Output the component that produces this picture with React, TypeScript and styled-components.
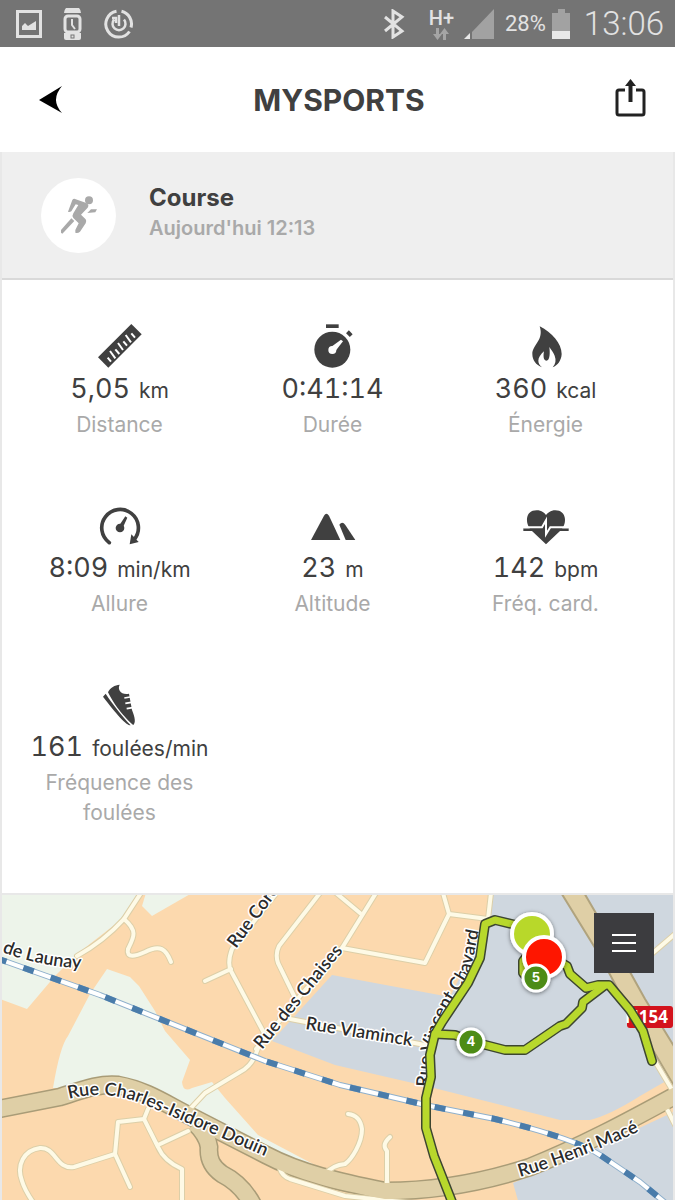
import React from 'react';
import styled, { createGlobalStyle } from 'styled-components';

const GlobalStyle = createGlobalStyle`
  *, *::before, *::after { box-sizing: border-box; }
  body {
    margin: 0;
    background: #fff;
    color: #404040;
    font-family: Inter, "Liberation Sans", sans-serif;
  }
`;

const Page = styled.div`
  display: flex;
  flex-direction: column;
  min-height: 100vh;
`;

const StatusBar = styled.div`
  display: flex;
  align-items: center;
  justify-content: space-between;
  height: 47px;
  padding: 0 11px 0 16px;
  background: #747474;
  color: #e2e2e2;
  font-family: Roboto, "Liberation Sans", sans-serif;
`;

const StatusGroup = styled.div<{ $gap: number }>`
  display: flex;
  align-items: center;
  gap: ${(p) => p.$gap}px;
`;

const Network = styled.span`
  display: flex;
  flex-direction: column;
  align-items: center;
  font-size: 20px;
  font-weight: 500;
  line-height: 20px;
  margin: 0 4px 0 18px;
`;

const Battery = styled.span`
  margin-left: 5px;
  font-size: 22px;
`;

const Clock = styled.time`
  font-size: 33px;
  font-weight: 300;
  margin-left: 8px;
`;

const Header = styled.header`
  display: flex;
  align-items: center;
  justify-content: space-between;
  height: 105px;
  padding: 0 27px 0 36px;
`;

const Title = styled.h1`
  margin: 0;
  font-size: 30px;
  font-weight: 700;
`;

const IconButton = styled.button`
  display: flex;
  padding: 0;
  border: 0;
  background: none;
  cursor: pointer;
`;

const Content = styled.main`
  display: flex;
  flex-direction: column;
  flex: 1;
  border: solid #e8e8e8;
  border-width: 0 2px;
`;

const Summary = styled.section`
  display: flex;
  align-items: center;
  gap: 33px;
  height: 128px;
  padding: 0 39px;
  background: #efefef;
  border-bottom: 2px solid #d9d9d9;
`;

const Avatar = styled.span`
  display: flex;
  align-items: center;
  justify-content: center;
  flex: none;
  width: 75px;
  height: 75px;
  border-radius: 50%;
  background: #fff;
`;

const Activity = styled.h2`
  margin: 0;
  font-size: 24px;
  line-height: 30px;
  font-weight: 700;
`;

const When = styled.p`
  margin: 0;
  padding-bottom: 4px;
  font-size: 20px;
  line-height: 30px;
  font-weight: 600;
  color: #a9a9a9;
`;

const Stats = styled.section`
  display: grid;
  grid-template-columns: repeat(3, 1fr);
  row-gap: 62px;
  padding: 43px 21px 65px 11px;
`;

const Stat = styled.div`
  display: flex;
  flex-direction: column;
  align-items: center;
  text-align: center;
`;

const StatIcon = styled.span`
  display: flex;
  align-items: center;
  height: 46px;
`;

const Value = styled.div`
  display: flex;
  align-items: baseline;
  gap: 9px;
  height: 41px;
  font-size: 27px;
  line-height: 40px;
  font-variant-numeric: tabular-nums;
  white-space: nowrap;
`;

const Unit = styled.span`
  font-size: 21px;
  line-height: 30px;
`;

const Label = styled.div`
  padding: 0 24px;
  font-size: 21px;
  line-height: 30px;
  color: #a9a9a9;
`;

const MapPanel = styled.section`
  position: relative;
  border-top: 2px solid #e8e8e8;
  overflow: hidden;
`;

const MapDrawing = styled.svg`
  display: block;
  width: 100%;
  height: auto;
`;

const MapMenu = styled.button`
  position: absolute;
  top: 18px;
  right: 19px;
  display: flex;
  align-items: center;
  justify-content: center;
  width: 60px;
  height: 60px;
  padding: 0;
  border: 0;
  background: #3c3c3f;
  cursor: pointer;
`;

type DrawingProps = { box: string; width: number; height: number; color?: string; children: React.ReactNode };

const Drawing = ({ box, width, height, color = '#404040', children }: DrawingProps) => (
  <svg viewBox={box} width={width} height={height} fill={color} aria-hidden="true">
    {children}
  </svg>
);

const RulerIcon = () => (
  <Drawing box="231 39 138 138" width={46} height={46}>
    <path d="M334 42L365 73L265 173L234 142Z" />
    <path
      d="M263 143L273 155M270 123L286 145M286 118L298 132M294 99L309 120M310 94L321 107M317 75L333 97M334 70L345 83"
      stroke="#fff"
      strokeWidth="6"
    />
  </Drawing>
);

const StopwatchIcon = () => (
  <Drawing box="869 39 138 138" width={46} height={46}>
    <circle cx="936" cy="119" r="54" />
    <rect x="917" y="43" width="38" height="11" />
    <rect x="979" y="65" width="16" height="12" transform="rotate(45 987 71)" />
    <circle cx="936" cy="120" r="12" fill="#fff" />
    <path d="M932 111L962 89L968 94L946 122Z" fill="#fff" />
  </Drawing>
);

const FlameIcon = () => (
  <Drawing box="488 39 138 138" width={46} height={46}>
    <path d="M538 49C575 68 604 100 604 132C603 152 592 166 577 172C586 162 588 150 583 137C579 126 572 119 567 111C569 125 570 152 558 152C548 152 549 134 551 124C541 133 534 143 534 152C534 160 539 167 545 172C527 165 516 150 516 132C516 105 552 90 538 49Z" />
  </Drawing>
);

const PaceIcon = () => (
  <Drawing box="231 40 138 138" width={46} height={46}>
    <path d="M268 162A55 55 0 1 1 343 152" fill="none" stroke="#404040" strokeWidth="11" strokeLinecap="round" />
    <path d="M334 137L329 167L356 160Z" />
    <circle cx="300" cy="118" r="13" />
    <path d="M298 110L316 83L322 87L309 116Z" />
  </Drawing>
);

const MountainIcon = () => (
  <Drawing box="869 36 138 138" width={46} height={46}>
    <path d="M872 150L911 77Q918 65 926 77L960 150Z" />
    <path d="M957 104Q966 92 975 105L1005 150L976 150Z" />
  </Drawing>
);

const HeartIcon = () => (
  <Drawing box="489 577 138 138" width={46} height={46}>
    <path d="M558 704L512 660C496 642 494 602 530 602C545 602 555 610 558 617C562 610 572 602 586 602C620 602 622 642 604 660Z" />
    <rect x="490" y="656" width="136" height="8" />
    <path d="M490 653H546L558 632V674L571 653H626" fill="none" stroke="#fff" strokeWidth="6" />
  </Drawing>
);

const ShoeIcon = () => (
  <Drawing box="231 38 138 138" width={46} height={46}>
    <path d="M249 85L257 76C280 112 310 146 332 171C318 171 290 138 249 85Z" />
    <path d="M264 72C270 58 285 50 299 49C291 64 304 81 327 76L336 125C346 150 347 163 340 170C332 165 288 122 264 72Z" />
    <path d="M313 89L330 86M316 105L334 102M320 121L338 118" stroke="#fff" strokeWidth="5" />
  </Drawing>
);

const STATS = [
  { value: '5,05', unit: 'km', label: 'Distance', Icon: RulerIcon },
  { value: '0:41:14', unit: '', label: 'Durée', Icon: StopwatchIcon },
  { value: '360', unit: 'kcal', label: 'Énergie', Icon: FlameIcon },
  { value: '8:09', unit: 'min/km', label: 'Allure', Icon: PaceIcon },
  { value: '23', unit: 'm', label: 'Altitude', Icon: MountainIcon },
  { value: '142', unit: 'bpm', label: 'Fréq. card.', Icon: HeartIcon },
  { value: '161', unit: 'foulées/min', label: 'Fréquence des foulées', Icon: ShoeIcon },
];

const MAIN_ROADS = [
  'M195 1122C203 1130 208 1138 209 1146C208 1158 212 1166 222 1173C236 1180 246 1190 254 1206',
  'M-6 1109L60 1096C82 1089 100 1082 118 1084C146 1089 166 1103 190 1115L266 1154C300 1172 340 1181 385 1190C440 1190 490 1179 530 1166C580 1146 625 1122 680 1092',
];

const LANES = [
  'M141 892L124 918Q104 940 77 955',
  'M124 918C138 930 134 936 128 948C126 958 136 955 145 951C160 943 166 948 171 961',
  'M275 894L232 948Q227 962 231 970L264 1032L255 1055Q250 1066 240 1071L205 1092L190 1108',
  'M231 968L205 980',
  'M320 892L279 945Q275 953 278 962L298 1003',
  'M256 1048L300 995L342 947L376 892',
  'M336 892L360 912',
  'M342 947L425 962L449 913L443 892M449 913L488 918L491 892',
  'M280 1016L430 1045',
  'M148 1108L144 1118L118 1121L115 1153L74 1166C56 1169 56 1146 40 1147C24 1149 16 1164 22 1180Q25 1190 35 1204',
  'M115 1153L130 1186',
  'M144 1118L158 1146Q164 1160 182 1168V1204M158 1144L188 1130',
  'M280 1168Q282 1175 290 1178L345 1195L430 1204',
  'M325 1173Q333 1164 345 1163C352 1158 362 1142 362 1128Q360 1114 348 1113',
  'M387 1182V1150Q381 1144 390 1136',
  'M656 1062L674 1092M640 963L675 933M668 1110L675 1124',
];

const RAILWAY =
  'M-4 957L100 994L200 1034L265 1060L340 1084L430 1105L495 1118C540 1129 580 1141 600 1154L640 1181L668 1204';

const TRACKS = [
  'M535 930L516 924L495 919L485 923L480 957L468 982L442 1021L435 1033L430 1054L431 1076L426 1097V1127L434 1155L454 1206',
  'M435 1033L455 1034L470 1040L505 1049H525L560 1025L566 1023L582 1007L583 1001L604 985',
  'M535 945L523 960V972L530 980',
  'M550 955L567 965L570 973L586 987L598 984H609L630 1009L643 1030L652 1060',
];

const StreetName = styled.text`
  font-family: Lato, "Noto Sans", sans-serif;
  font-size: 18px;
  font-weight: 600;
  fill: #2b2b2b;
  stroke: #fff;
  stroke-width: 3px;
  stroke-linejoin: round;
  paint-order: stroke;
`;

const MarkerText = styled.text`
  font-family: Inter, sans-serif;
  font-size: 13px;
  font-weight: 700;
  fill: #fff;
  text-anchor: middle;
`;

const ShieldText = styled.text`
  font-family: "Open Sans", sans-serif;
  font-size: 17px;
  font-weight: 700;
  fill: #fff;
  text-anchor: end;
`;

const STREETS = [
  { id: 'launay', name: 'de Launay', d: 'M2 951Q40 966 90 968' },
  { id: 'coro', name: 'Rue Coro', d: 'M236 948L290 875' },
  { id: 'chaises', name: 'Rue des Chaises', d: 'M262 1049L352 939' },
  { id: 'vlaminck', name: 'Rue Vlaminck', d: 'M305 1028L430 1048' },
  { id: 'chavard', name: 'Rue Vincent Chavard', d: 'M429 1086Q430 1045 448 1008L470 972L482 915' },
  { id: 'douin', name: 'Rue Charles-Isidore Douin', d: 'M69 1098Q110 1087 150 1106L290 1166' },
  { id: 'mace', name: 'Rue Henri Macé', d: 'M520 1176Q590 1155 660 1120' },
];

const RouteMap = () => (
  <MapDrawing viewBox="2 894 671 306" role="img" aria-label="Parcours">
    <defs>
      {STREETS.map((s) => (
        <path key={s.id} id={s.id} d={s.d} />
      ))}
      <filter id="shade" x="-50%" y="-50%" width="200%" height="200%">
        <feDropShadow dx="0" dy="1" stdDeviation="2" floodOpacity="0.5" />
      </filter>
    </defs>
    <rect x="0" y="890" width="680" height="320" fill="#fcd9ae" />
    <g fill="#edf4ea">
      <path d="M0 890H142L122 918L77 953L55 975L27 1008L0 998Z" />
      <path d="M142 905L152 915L192 892H146Z" />
      <path d="M107 968L130 976L139 985L155 1010L165 1030L190 1059L182 1081Q183 1092 192 1087L212 1081L225 1097L258 1134L330 1172L320 1180L190 1115L140 1085L53 1087Q60 1045 68 1035L90 993Z" />
    </g>
    <g fill="#cfd7df">
      <path d="M491 890H680V1072L640 1095Q610 1114 590 1119H560L430 1086L335 1064L272 1040L332 974L450 996L475 945L486 920Z" />
      <path d="M513 1182L590 1150L680 1108V1210H521Z" />
    </g>
    <path
      d="M560 890L600 955L622 996L650 1044L680 1095V1055L645 998L625 962L583 890Z"
      fill="#dfcfa6"
      stroke="#b0a37e"
      strokeWidth="2"
    />
    <g fill="none" strokeLinejoin="round">
      {MAIN_ROADS.map((d) => <path key={d} d={d} stroke="#a99c77" strokeWidth="19" />)}
      {LANES.map((d) => <path key={d} d={d} stroke="#dccfa8" strokeWidth="6" strokeLinecap="round" />)}
      {LANES.map((d) => <path key={d} d={d} stroke="#fefae6" strokeWidth="4" strokeLinecap="round" />)}
      {MAIN_ROADS.map((d) => <path key={d} d={d} stroke="#dfcfa6" strokeWidth="16" />)}
      <path d={RAILWAY} stroke="#8fb0cc" strokeWidth="6" />
      <path d={RAILWAY} stroke="#fff" strokeWidth="4" />
      <path d={RAILWAY} stroke="#4a7caa" strokeWidth="6" strokeDasharray="11 18" />
    </g>
    {STREETS.map((s) => (
      <StreetName key={s.id}>
        <textPath href={`#${s.id}`}>{s.name}</textPath>
      </StreetName>
    ))}
    <rect x="627" y="1005" width="46" height="22" rx="3" fill="#d3121c" />
    <ShieldText x="668" y="1022">N154</ShieldText>
    <g fill="none" strokeLinejoin="round" strokeLinecap="round">
      {TRACKS.map((d) => <path key={d} d={d} stroke="#3d4630" strokeWidth="10" />)}
      {TRACKS.map((d) => <path key={d} d={d} stroke="#b8d82c" strokeWidth="7" />)}
    </g>
    <g stroke="#fff" strokeWidth="4" filter="url(#shade)">
      <circle cx="532" cy="933" r="20" fill="#b8d82c" />
      <circle cx="544" cy="956" r="20" fill="#fe1500" />
      <circle cx="536" cy="977" r="13" fill="#4e8c12" strokeWidth="3" />
      <circle cx="471" cy="1041" r="13" fill="#4e8c12" strokeWidth="3" />
    </g>
    <MarkerText x="536" y="981">5</MarkerText>
    <MarkerText x="471" y="1045">4</MarkerText>
  </MapDrawing>
);

export default function App() {
  return (
    <Page>
      <GlobalStyle />
      <StatusBar>
        <StatusGroup $gap={20}>
          <Drawing box="0 0 26 28" width={26} height={28} color="#e2e2e2">
            <path d="M0 0H26V28H0ZM3 3V25H23V3Z" fillRule="evenodd" />
            <path d="M6 20V16L9 13L12 16L20 11V20Z" />
          </Drawing>
          <Drawing box="-1 0 22 32" width={22} height={32} color="#e2e2e2">
            <path d="M3 0H16Q18 2 18 5H1Q1 2 3 0Z" />
            <path d="M1 25H18V30Q18 32 16 32H3Q1 32 1 30Z" />
            <rect x="2" y="8" width="15" height="16" rx="3" fill="none" stroke="#e2e2e2" strokeWidth="3" />
            <path d="M9 11V17L12 21" fill="none" stroke="#e2e2e2" strokeWidth="2" />
            <rect x="8" y="27" width="3" height="3" fill="none" stroke="#747474" />
          </Drawing>
          <Drawing box="0 0 30 30" width={30} height={30} color="none">
            <g stroke="#e2e2e2" strokeWidth="3">
              <path d="M12.500 2.300A13 13 0 1 0 25.500 22.500M27 18.500A13 13 0 0 0 17.500 2.300" />
              <path d="M10 10.500A6.500 6.500 0 1 0 20 10.500M15 17V6M8 9H12V14" strokeWidth="2.500" />
            </g>
          </Drawing>
        </StatusGroup>
        <StatusGroup $gap={6}>
          <Drawing box="0 0 22 30" width={22} height={30} color="none">
            <path d="M2 8L19 22L10 28V2L19 8L2 22" stroke="#e2e2e2" strokeWidth="3" />
          </Drawing>
          <Network>
            H+
            <Drawing box="0 0 16 12" width={16} height={12} color="#a5a5a5">
              <path d="M3 0H6V6H9L4.500 12L0 6H3ZM10 12H13V6H16L11.500 0L7 6H10Z" />
            </Drawing>
          </Network>
          <Drawing box="0 0 30 30" width={30} height={30} color="#a2a2a2">
            <path d="M30 0V30H8V23Z" />
            <path d="M6 24V30H0Z" fill="#e8e8e8" />
          </Drawing>
          <Battery>28%</Battery>
          <Drawing box="0 0 18 30" width={18} height={30} color="#a2a2a2">
            <path d="M6 0H13V4H18V30H0V4H6Z" />
            <path d="M0 22H18V30H0Z" fill="#e8e8e8" />
          </Drawing>
          <Clock>13:06</Clock>
        </StatusGroup>
      </StatusBar>

      <Header>
        <IconButton aria-label="Retour">
          <Drawing box="0 0 30 30" width={30} height={30} color="#000">
            <path d="M3 15L26 1Q14 15 26 28Z" />
          </Drawing>
        </IconButton>
        <Title>MYSPORTS</Title>
        <IconButton aria-label="Partager">
          <Drawing box="0 3 36 42" width={36} height={42} color="none">
            <path d="M13 14H7Q5 14 5 16V37Q5 39 7 39H30Q32 39 32 37V16Q32 14 30 14H24" stroke="#222" strokeWidth="3" />
            <path d="M18.500 26V8" stroke="#222" strokeWidth="4" />
            <path d="M18.500 3L24 10H13Z" fill="#222" />
          </Drawing>
        </IconButton>
      </Header>

      <Content>
        <Summary>
          <Avatar>
            <Drawing box="180 135 120 120" width={40} height={40} color="#a9a9a9">
              <circle cx="270" cy="151" r="12" />
              <path d="M226 146L262 159Q272 164 266 173L246 194L260 208Q264 214 260 220L243 245Q236 251 229 248V240L239 220L223 204Q218 198 223 190L238 165L230 163L217 184Q211 188 207 185L220 150Q222 146 226 146Z" />
              <path d="M265 189L276 178H294L289 187Z" />
              <path d="M217 205L226 213L190 251L186 248V240Z" />
            </Drawing>
          </Avatar>
          <div>
            <Activity>Course</Activity>
            <When>Aujourd'hui 12:13</When>
          </div>
        </Summary>

        <Stats>
          {STATS.map(({ value, unit, label, Icon }) => (
            <Stat key={label}>
              <StatIcon><Icon /></StatIcon>
              <Value>
                {value}
                {unit && <Unit>{unit}</Unit>}
              </Value>
              <Label>{label}</Label>
            </Stat>
          ))}
        </Stats>

        <MapPanel>
          <RouteMap />
          <MapMenu aria-label="Menu de la carte">
            <Drawing box="0 0 24 20" width={24} height={20} color="#fff">
              <path d="M0 1H24V3H0ZM0 9H24V11H0ZM0 17H24V19H0Z" />
            </Drawing>
          </MapMenu>
        </MapPanel>
      </Content>
    </Page>
  );
}
